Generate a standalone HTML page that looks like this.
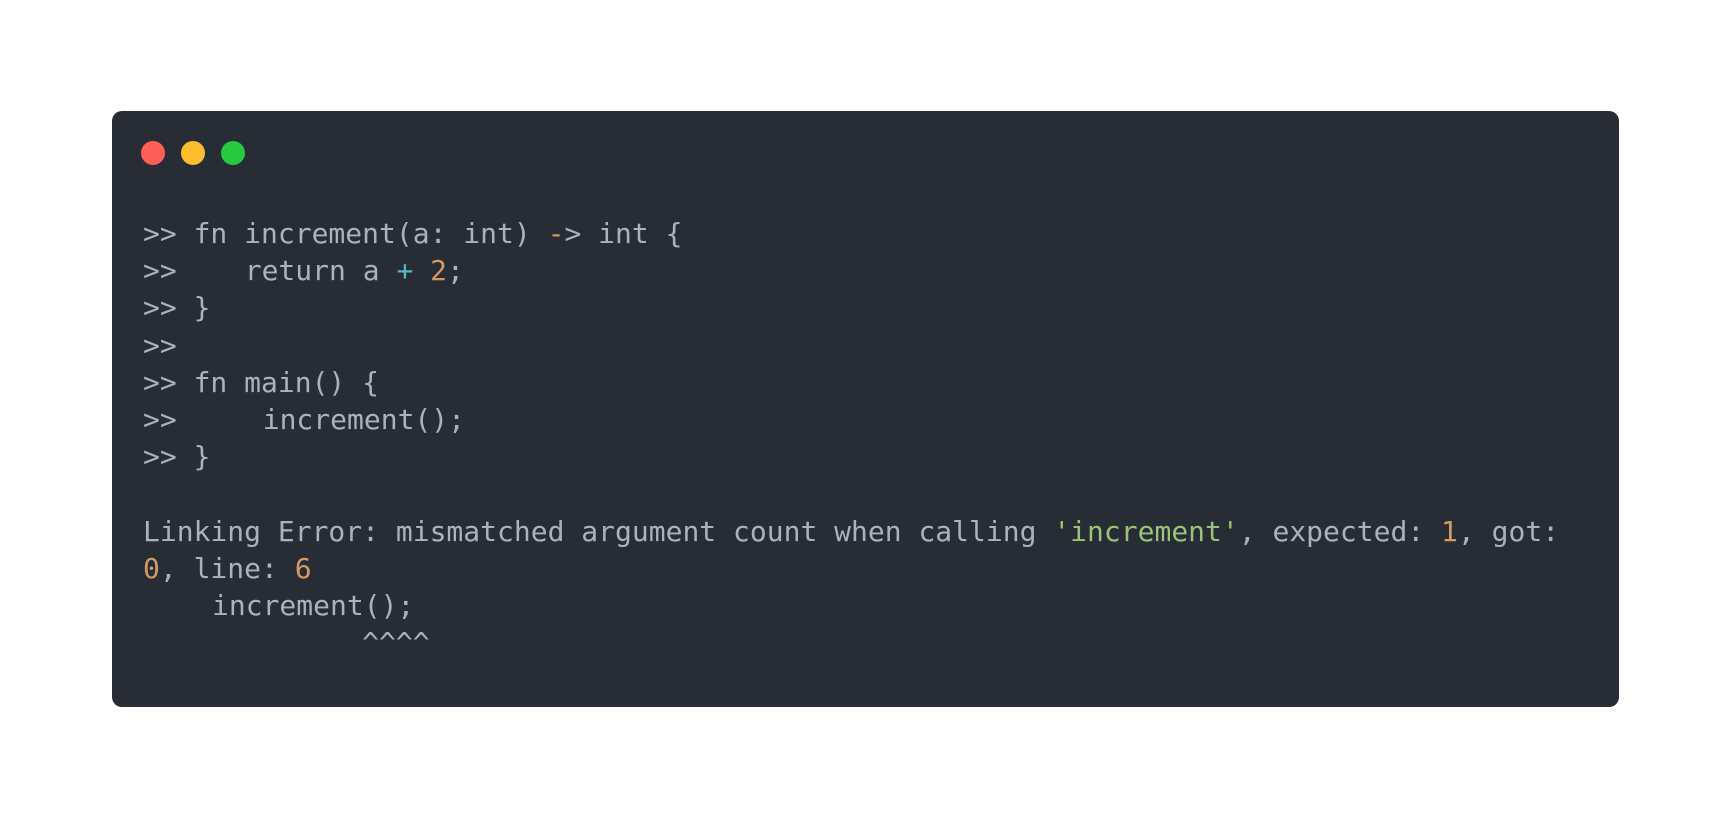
<!DOCTYPE html>
<html><head><meta charset="utf-8"><style>
html,body{margin:0;padding:0;background:#fff;width:1732px;height:818px;overflow:hidden}
.card{position:absolute;left:112px;top:111px;width:1507px;height:596px;background:#282c34;border-radius:10px}
.dot{position:absolute;top:141px;width:24px;height:24px;border-radius:50%}
.code{position:absolute;left:143px;top:215px;font-family:"DejaVu Sans Mono","Liberation Mono",monospace;font-size:28px;letter-spacing:0px;line-height:37.2px;color:#abb2bf;white-space:pre}
.o{color:#d19a66}.g{color:#98c379}.c{color:#56b6c2}
.in{display:inline-block}
</style></head><body>
<div class="card"></div>
<div class="dot" style="left:141px;background:#ff5f56"></div>
<div class="dot" style="left:181px;background:#ffbd2e"></div>
<div class="dot" style="left:221px;background:#27c93f"></div>
<div class="code"><div>&gt;&gt; fn increment(a: int) <span class="o">-</span>&gt; int {</div><div>&gt;&gt;<span class="in" style="margin-left:68px">return a <span class="c">+</span> <span class="o">2</span>;</span></div><div>&gt;&gt; }</div><div>&gt;&gt;</div><div>&gt;&gt; fn main() {</div><div>&gt;&gt;<span class="in" style="margin-left:86px">increment();</span></div><div>&gt;&gt; }</div><div> </div><div>Linking Error: mismatched argument count when calling <span class="g">'increment'</span>, expected: <span class="o">1</span>, got:</div><div><span class="o">0</span>, line: <span class="o">6</span></div><div><span class="in" style="margin-left:69px">increment();</span></div><div>             ^^^^</div></div>
</body></html>
